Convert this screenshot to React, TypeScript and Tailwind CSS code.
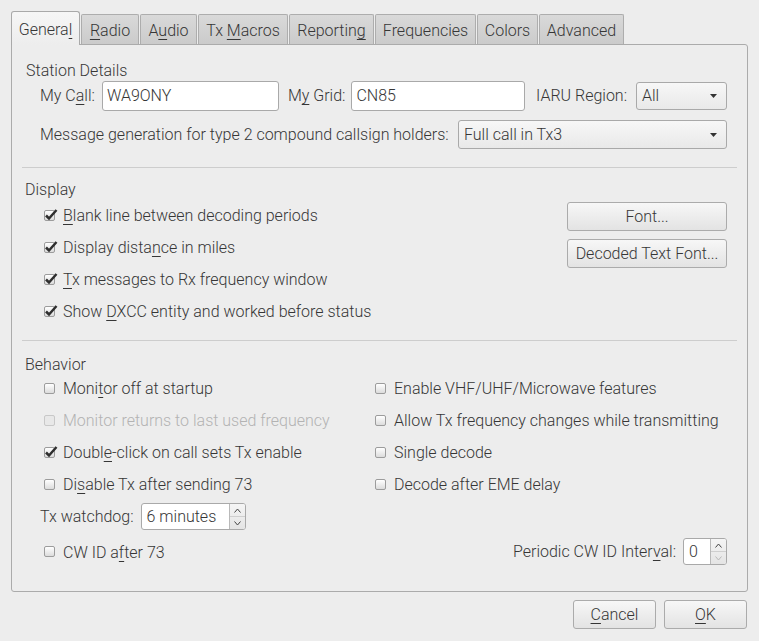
import React from "react";

const U = ({ children }: { children: React.ReactNode }) => (
  <span className="underline decoration-1 underline-offset-[3px]">{children}</span>
);

const Box = ({ checked, disabled }: { checked?: boolean; disabled?: boolean }) => (
  <span
    className={`relative block h-[11px] w-[11px] shrink-0 rounded-[2px] border ${
      disabled ? "border-[#c8c8c8] bg-[#e8e8e8]" : "border-[#9c9c9c] bg-linear-to-b from-white to-[#dcdcdc]"
    }`}
  >
    {checked && (
      <svg className="absolute -left-px -top-[3px]" width="14" height="13" viewBox="0 0 14 13">
        <path d="M2 7.5 L5 10.5 L12.5 2" stroke="#2e2e2e" strokeWidth="2.5" fill="none" />
      </svg>
    )}
  </span>
);

const Check = ({
  checked,
  disabled,
  children,
}: {
  checked?: boolean;
  disabled?: boolean;
  children: React.ReactNode;
}) => (
  <div className={`flex h-8 items-center ${disabled ? "text-[#b3b3b3]" : ""}`}>
    <Box checked={checked} disabled={disabled} />
    <span className="ml-2 whitespace-nowrap pt-[2px]">{children}</span>
  </div>
);

const Arrow = () => (
  <svg width="7" height="4" viewBox="0 0 7 4" className="shrink-0">
    <path d="M0 0 H7 L3.5 4 Z" fill="#333" />
  </svg>
);

const Combo = ({ value, className }: { value: string; className: string }) => (
  <div
    className={`flex items-center justify-between rounded-[3px] border border-[#a9a9a9] bg-linear-to-b from-[#f7f7f7] to-[#e9e9e9] pl-[5px] pr-[9px] ${className}`}
  >
    <span>{value}</span>
    <Arrow />
  </div>
);

const Spin = ({ value, className, downOff }: { value: string; className: string; downOff?: boolean }) => (
  <div className={`flex overflow-hidden rounded-[3px] border border-[#a9a9a9] bg-white ${className}`}>
    <div className="flex flex-1 items-center pl-[5px]">{value}</div>
    <div className="flex w-[16px] flex-col border-l border-[#b9b9b9] bg-linear-to-b from-[#f5f5f5] to-[#e4e4e4]">
      <div className="flex flex-1 items-center justify-center border-b border-[#cfcfcf]">
        <svg width="7" height="5" viewBox="0 0 7 5">
          <path d="M0.5 4.5 L3.5 1 L6.5 4.5" stroke="#444" strokeWidth="1" fill="none" />
        </svg>
      </div>
      <div className="flex flex-1 items-center justify-center">
        <svg width="7" height="5" viewBox="0 0 7 5">
          <path d="M0.5 0.5 L3.5 4 L6.5 0.5" stroke={downOff ? "#b8b8b8" : "#444"} strokeWidth="1" fill="none" />
        </svg>
      </div>
    </div>
  </div>
);

const Button = ({ children, className }: { children: React.ReactNode; className: string }) => (
  <div
    className={`flex items-center justify-center rounded-[3px] border border-[#ababab] bg-linear-to-b from-[#f7f7f7] to-[#e3e3e3] ${className}`}
  >
    <span>{children}</span>
  </div>
);

const tabs: { label: React.ReactNode; w: string }[] = [
  { label: <><U>R</U>adio</>, w: "w-[58px]" },
  { label: <>A<U>u</U>dio</>, w: "w-[57px]" },
  { label: <>Tx <U>M</U>acros</>, w: "w-[90px]" },
  { label: <>Reportin<U>g</U></>, w: "w-[85px]" },
  { label: <>Frequencies</>, w: "w-[101px]" },
  { label: <>Colors</>, w: "w-[61px]" },
  { label: <>Advanced</>, w: "w-[85px]" },
];

export default function App() {
  return (
    <div
      className="h-[641px] w-[759px] bg-[#ededed] px-[11px] pt-[11px] text-[16px] leading-5 font-light text-[#363636]"
      style={{ fontFamily: "Roboto, 'Liberation Sans', sans-serif" }}
    >
      {/* tab bar */}
      <div className="relative z-10 flex h-[33px] items-end">
        <div className="-mb-px flex h-[34px] w-[69px] items-center justify-center rounded-t-[3px] border border-b-0 border-[#a9a9a9] bg-linear-to-b from-[#f6f6f6] to-[#ededed] pt-[3px]">
          <span>
            Genera<U>l</U>
          </span>
        </div>
        {tabs.map((t, i) => (
          <div
            key={i}
            className={`ml-px flex h-[30px] ${t.w} items-center justify-center rounded-t-[2px] border border-b-0 border-[#adadad] bg-linear-to-b from-[#d9d9d9] to-[#cbcbcb] pt-[3px]`}
          >
            <span className="whitespace-nowrap">{t.label}</span>
          </div>
        ))}
      </div>

      {/* page */}
      <div className="h-[548px] w-[737px] rounded-[3px] rounded-tl-none border border-[#ababab] px-[10px] pt-[16px]">
        {/* Station Details */}
        <div className="pl-1">Station Details</div>
        <div className="flex h-[30px] items-center pl-[18px] pr-[10px]">
          <span>
            My C<U>a</U>ll:
          </span>
          <div className="ml-[7px] flex h-[30px] w-[177px] items-center rounded-[3px] border border-[#a9a9a9] bg-white pl-[4px]">
            WA9ONY
          </div>
          <span className="ml-[9px]">
            M<U>y</U> Grid:
          </span>
          <div className="ml-[6px] flex h-[30px] w-[174px] items-center rounded-[3px] border border-[#a9a9a9] bg-white pl-[4px]">
            CN85
          </div>
          <span className="ml-auto">IARU Region:</span>
          <Combo value="All" className="ml-[9px] h-[28px] w-[91px]" />
        </div>
        <div className="mt-[9px] flex h-[29px] items-center pl-[18px] pr-[10px]">
          <span>Message generation for type 2 compound callsign holders:</span>
          <Combo value="Full call in Tx3" className="ml-auto h-[29px] w-[269px]" />
        </div>
        <div className="mt-[18px] border-t border-[#cdcdcd]" />

        {/* Display */}
        <div className="mt-[12px] pl-[3px]">Display</div>
        <div className="-mt-px flex pl-[22px] pr-[10px]">
          <div className="flex-1">
            <Check checked>
              <U>B</U>lank line between decoding periods
            </Check>
            <Check checked>
              Display dista<U>n</U>ce in miles
            </Check>
            <Check checked>
              <U>T</U>x messages to Rx frequency window
            </Check>
            <Check checked>
              Show <U>D</U>XCC entity and worked before status
            </Check>
          </div>
          <div className="flex flex-col gap-2 pt-[3px]">
            <Button className="h-[29px] w-[160px]">Font...</Button>
            <Button className="h-[29px] w-[160px]">Decoded Text Font...</Button>
          </div>
        </div>
        <div className="mt-[13px] border-t border-[#cdcdcd]" />

        {/* Behavior */}
        <div className="mt-[14px] pl-[3px]">Behavior</div>
        <div className="-mt-[3px] grid grid-cols-[331px_1fr] pl-[22px]">
          <Check>
            Moni<U>t</U>or off at startup
          </Check>
          <Check>Enable VHF/UHF/Microwave features</Check>
          <Check disabled>Monitor returns to last used frequency</Check>
          <Check>Allow Tx frequency changes while transmitting</Check>
          <Check checked>
            Doubl<U>e</U>-click on call sets Tx enable
          </Check>
          <Check>Single decode</Check>
          <Check>
            Di<U>s</U>able Tx after sending 73
          </Check>
          <Check>Decode after EME delay</Check>
        </div>
        <div className="mt-[3px] flex h-[27px] items-center pl-[18px]">
          <span className="pt-px">Tx watchdog:</span>
          <Spin value="6 minutes" className="ml-[7px] h-[27px] w-[105px]" />
        </div>
        <div className="mt-[8px] flex h-[27px] items-center pl-[22px] pr-[10px]">
          <Box />
          <span className="ml-2 pt-[2px]">
            CW ID a<U>f</U>ter 73
          </span>
          <span className="ml-auto pt-px">
            Periodic CW ID Inter<U>v</U>al:
          </span>
          <Spin value="0" className="ml-[7px] h-[27px] w-[44px]" downOff />
        </div>
      </div>

      {/* dialog buttons */}
      <div className="mt-2 flex justify-end gap-2 pr-px">
        <Button className="h-[29px] w-[83px]">
          <U>C</U>ancel
        </Button>
        <Button className="h-[29px] w-[83px]">
          <U>O</U>K
        </Button>
      </div>
    </div>
  );
}
